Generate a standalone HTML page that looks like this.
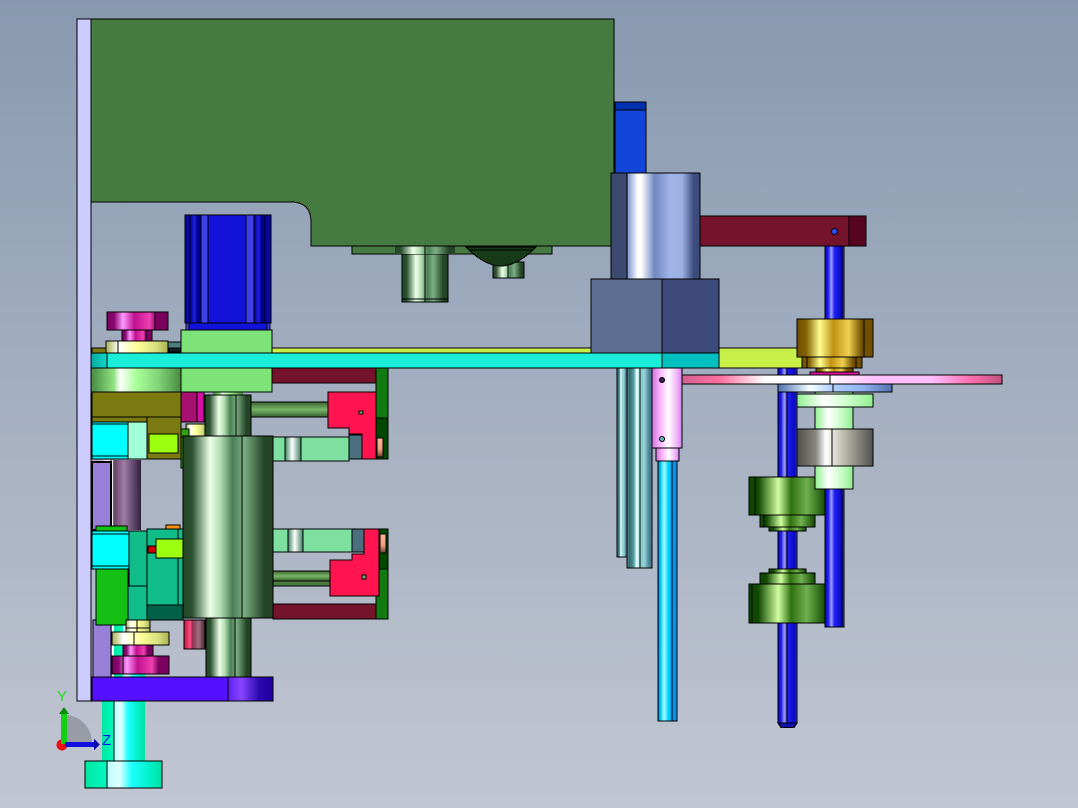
<!DOCTYPE html>
<html><head><meta charset="utf-8"><style>
html,body{margin:0;padding:0;width:1078px;height:808px;overflow:hidden;background:linear-gradient(#8799b0,#c2c6d2)}
svg{display:block}
rect,path.s,polygon{stroke:#000;stroke-width:1}
line{stroke:#000;stroke-width:1}
text{font-family:"Liberation Sans",sans-serif}
</style></head><body>
<svg width="1078" height="808" viewBox="0 0 1078 808" xmlns="http://www.w3.org/2000/svg" shape-rendering="crispEdges">
<defs>
<linearGradient id="mg"><stop offset="0" stop-color="#7a0060"/><stop offset=".12" stop-color="#8a0870"/><stop offset=".26" stop-color="#ff99ff"/><stop offset=".45" stop-color="#c01090"/><stop offset=".7" stop-color="#f040b0"/><stop offset=".82" stop-color="#7a0060"/><stop offset="1" stop-color="#7a0060"/></linearGradient>
<linearGradient id="py"><stop offset="0" stop-color="#a8b050"/><stop offset=".2" stop-color="#fff"/><stop offset=".5" stop-color="#ffff99"/><stop offset=".8" stop-color="#d8e080"/><stop offset="1" stop-color="#a8b050"/></linearGradient>
<linearGradient id="gc"><stop offset="0" stop-color="#458840"/><stop offset=".25" stop-color="#90e080"/><stop offset=".32" stop-color="#fff"/><stop offset=".5" stop-color="#a8ff98"/><stop offset=".75" stop-color="#80d078"/><stop offset="1" stop-color="#458840"/></linearGradient>
<linearGradient id="dg"><stop offset="0" stop-color="#234525"/><stop offset=".1" stop-color="#2a5030"/><stop offset=".3" stop-color="#ecffe8"/><stop offset=".42" stop-color="#b0dcb0"/><stop offset=".55" stop-color="#4a7f55"/><stop offset=".68" stop-color="#7cae84"/><stop offset=".9" stop-color="#234525"/><stop offset="1" stop-color="#234525"/></linearGradient>
<linearGradient id="rod" x2="0" y2="1"><stop offset="0" stop-color="#3a6030"/><stop offset=".5" stop-color="#78b868"/><stop offset="1" stop-color="#3a6030"/></linearGradient>
<linearGradient id="mint"><stop offset="0" stop-color="#3a8060"/><stop offset=".45" stop-color="#fff"/><stop offset="1" stop-color="#3a8060"/></linearGradient>
<linearGradient id="sal" x2="0" y2="1"><stop offset="0" stop-color="#ffb898"/><stop offset=".6" stop-color="#f0a080"/><stop offset="1" stop-color="#604030"/></linearGradient>
<linearGradient id="pur"><stop offset="0" stop-color="#f0d0f0"/><stop offset=".25" stop-color="#fff"/><stop offset=".28" stop-color="#604060"/><stop offset=".55" stop-color="#a07ca8"/><stop offset="1" stop-color="#30203c"/></linearGradient>
<linearGradient id="bb"><stop offset="0" stop-color="#000090"/><stop offset=".4" stop-color="#2020e0"/><stop offset=".7" stop-color="#000090"/><stop offset="1" stop-color="#000090"/></linearGradient>
<linearGradient id="brod"><stop offset="0" stop-color="#0808c0"/><stop offset=".18" stop-color="#2020f0"/><stop offset=".33" stop-color="#a0a0ff"/><stop offset=".5" stop-color="#2020f0"/><stop offset=".9" stop-color="#0808c0"/><stop offset="1" stop-color="#5050e0"/></linearGradient>
<linearGradient id="cyl"><stop offset="0" stop-color="#3d4a70"/><stop offset=".18" stop-color="#3d4a70"/><stop offset=".19" stop-color="#8098d0"/><stop offset=".3" stop-color="#fff"/><stop offset=".34" stop-color="#fff"/><stop offset=".49" stop-color="#7088c0"/><stop offset=".66" stop-color="#a0b4e8"/><stop offset=".8" stop-color="#9cb0e4"/><stop offset=".93" stop-color="#3c4a7c"/><stop offset="1" stop-color="#3c4a7c"/></linearGradient>
<linearGradient id="tealr"><stop offset="0" stop-color="#788c90"/><stop offset=".1" stop-color="#2e6a70"/><stop offset=".28" stop-color="#5aa0a4"/><stop offset=".38" stop-color="#e8ffff"/><stop offset=".6" stop-color="#80c8c8"/><stop offset=".68" stop-color="#98d8e0"/><stop offset=".9" stop-color="#4a7a8c"/><stop offset="1" stop-color="#4a8090"/></linearGradient>
<linearGradient id="ptube"><stop offset="0" stop-color="#d070e0"/><stop offset=".3" stop-color="#ffbbff"/><stop offset=".55" stop-color="#fff"/><stop offset=".85" stop-color="#f0b0f8"/><stop offset="1" stop-color="#d080e8"/></linearGradient>
<linearGradient id="cyr"><stop offset="0" stop-color="#0070b0"/><stop offset=".12" stop-color="#00c0f0"/><stop offset=".32" stop-color="#a0ffff"/><stop offset=".55" stop-color="#00d0ff"/><stop offset=".7" stop-color="#00b0f0"/><stop offset=".71" stop-color="#000"/><stop offset=".75" stop-color="#000"/><stop offset=".76" stop-color="#0090f0"/><stop offset="1" stop-color="#1090f0"/></linearGradient>
<linearGradient id="pbar"><stop offset="0" stop-color="#d06090"/><stop offset=".12" stop-color="#ff70a0"/><stop offset=".26" stop-color="#fff"/><stop offset=".45" stop-color="#fff"/><stop offset=".6" stop-color="#ffc0ff"/><stop offset=".78" stop-color="#ffc0ff"/><stop offset=".9" stop-color="#ff70b0"/><stop offset="1" stop-color="#c05080"/></linearGradient>
<linearGradient id="disc"><stop offset="0" stop-color="#5070b0"/><stop offset=".28" stop-color="#f4ffff"/><stop offset=".48" stop-color="#b0d0ff"/><stop offset=".75" stop-color="#90b0f0"/><stop offset="1" stop-color="#5070b0"/></linearGradient>
<linearGradient id="gold"><stop offset="0" stop-color="#705000"/><stop offset=".12" stop-color="#806000"/><stop offset=".3" stop-color="#ffff90"/><stop offset=".48" stop-color="#c09010"/><stop offset=".68" stop-color="#f0d050"/><stop offset=".85" stop-color="#705000"/><stop offset="1" stop-color="#705000"/></linearGradient>
<linearGradient id="lg"><stop offset="0" stop-color="#90f090"/><stop offset=".35" stop-color="#fff"/><stop offset=".6" stop-color="#d8ffd8"/><stop offset="1" stop-color="#90f090"/></linearGradient>
<linearGradient id="grey"><stop offset="0" stop-color="#505048"/><stop offset=".25" stop-color="#888880"/><stop offset=".38" stop-color="#fff"/><stop offset=".6" stop-color="#c0c0b0"/><stop offset="1" stop-color="#505050"/></linearGradient>
<linearGradient id="pul"><stop offset="0" stop-color="#104800"/><stop offset=".12" stop-color="#104800"/><stop offset=".38" stop-color="#d0ffa0"/><stop offset=".55" stop-color="#307010"/><stop offset=".75" stop-color="#70b050"/><stop offset="1" stop-color="#104800"/></linearGradient>
<linearGradient id="stem"><stop offset="0" stop-color="#00e8a0"/><stop offset=".28" stop-color="#00f8c0"/><stop offset=".3" stop-color="#c0ffff"/><stop offset=".45" stop-color="#e0ffff"/><stop offset=".6" stop-color="#20ffff"/><stop offset=".85" stop-color="#00f0c8"/><stop offset="1" stop-color="#00e0a0"/></linearGradient>
<linearGradient id="vio"><stop offset="0" stop-color="#6020f0"/><stop offset=".3" stop-color="#8844ff"/><stop offset=".7" stop-color="#2808b0"/><stop offset="1" stop-color="#2000a0"/></linearGradient>
<linearGradient id="red2"><stop offset="0" stop-color="#c01040"/><stop offset=".3" stop-color="#ff5080"/><stop offset=".4" stop-color="#903050"/><stop offset=".7" stop-color="#a07080"/><stop offset="1" stop-color="#402028"/></linearGradient>
<linearGradient id="tp"><stop offset="0" stop-color="#00a8a0"/><stop offset="1" stop-color="#10d8c8"/></linearGradient>
</defs>

<!-- rear blue / cylinder group -->
<rect x="615" y="102" width="31" height="8" fill="#0030b0"/>
<rect x="615" y="110" width="31" height="63" fill="#1346d8"/>

<!-- main green plate -->
<rect x="352" y="246" width="200" height="8" fill="#457a40"/>
<rect x="402" y="254" width="46" height="48" fill="url(#dg)"/>
<rect x="395" y="246" width="60" height="8" fill="url(#dg)" style="stroke:none"/>
<line x1="425" y1="246" x2="425" y2="302"/><line x1="402" y1="299" x2="448" y2="299"/>
<rect x="493" y="262" width="31" height="16" fill="url(#dg)"/><line x1="508" y1="262" x2="508" y2="278"/>
<path class="s" d="M466 247H536L532 251C522 260 512 266 501 266C490 266 480 260 470 251Z" fill="#173a18"/>
<line x1="470" y1="250" x2="532" y2="250"/>
<path class="s" d="M91 19H614V246H311V222Q311 202 291 202H91Z" fill="#457a40"/>

<!-- left plate -->
<rect x="77" y="19" width="14" height="682" fill="#ccccff"/>

<!-- motor -->
<rect x="185" y="215" width="86" height="108" fill="#1212d8"/>
<rect x="185" y="215" width="5" height="108" fill="#0808a0"/>
<rect x="190" y="215" width="11" height="108" fill="url(#bb)"/>
<rect x="201" y="215" width="7" height="108" fill="#4040e8"/>
<rect x="246" y="215" width="8" height="108" fill="#4040e8"/>
<rect x="254" y="215" width="11" height="108" fill="url(#bb)"/>
<rect x="265" y="215" width="6" height="108" fill="#0808a0"/>
<rect x="186" y="323" width="84" height="7" fill="#1212d8"/>
<rect x="186" y="323" width="3" height="7" fill="#4040e8"/>
<rect x="267" y="323" width="3" height="7" fill="#4040e8"/>

<!-- top left hat -->
<rect x="107" y="312" width="61" height="18" fill="url(#mg)"/><line x1="155" y1="312" x2="155" y2="330"/>
<rect x="122" y="330" width="30" height="11" fill="url(#mg)"/><line x1="146" y1="330" x2="146" y2="341"/>
<rect x="92" y="348" width="15" height="5" fill="#7a7a10"/>
<rect x="168" y="342" width="14" height="11" fill="#4a8080"/>
<rect x="169" y="348" width="12" height="4" fill="#102020"/>
<rect x="106" y="341" width="62" height="12" fill="url(#py)"/><line x1="118" y1="341" x2="118" y2="353"/>

<!-- long strips -->
<rect x="272" y="348" width="320" height="5" fill="#c8f048"/>
<rect x="719" y="348" width="83" height="20" fill="#c8f048"/>

<!-- left side lower parts (behind) -->
<rect x="103" y="460" width="38" height="70" fill="url(#pur)" style="stroke:none"/>
<line x1="111" y1="460" x2="111" y2="530"/>
<rect x="92" y="462" width="19" height="68" fill="#9880d8" style="stroke-width:2"/>

<!-- dark red bars -->
<rect x="272" y="368" width="104" height="15" fill="#75122c"/>
<rect x="273" y="604" width="103" height="15" fill="#75122c"/>

<!-- upper right-of-column assembly -->
<rect x="376" y="368" width="12" height="50" fill="#117a11"/>
<rect x="376" y="418" width="12" height="41" fill="#004800"/>
<rect x="377" y="438" width="6" height="19" fill="url(#sal)"/>
<rect x="251" y="402" width="77" height="15" fill="url(#rod)"/>
<polygon points="328,392 376,392 376,459 362,459 362,434 349,434 349,428 328,428" fill="#ff1450"/>
<rect x="349" y="435" width="13" height="24" fill="#4a7080"/>
<rect x="273" y="437" width="76" height="24" fill="#7de0a0"/>
<rect x="285" y="437" width="16" height="24" fill="url(#mint)"/>
<path class="s" d="M359 411h4v3h-4z" fill="#6fae70"/>

<!-- lower right-of-column assembly -->
<rect x="379" y="529" width="9" height="40" fill="#004800"/>
<rect x="380" y="534" width="6" height="19" fill="url(#sal)"/>
<rect x="376" y="569" width="12" height="50" fill="#117a11"/>
<rect x="273" y="571" width="57" height="10" fill="url(#rod)"/>
<rect x="273" y="581" width="57" height="5" fill="#4a7a40"/>
<polygon points="364,529 379,529 379,596 330,596 330,560 352,560 352,554 364,554" fill="#ff1450"/>
<rect x="352" y="529" width="12" height="23" fill="#4a7080"/>
<rect x="273" y="529" width="79" height="23" fill="#7de0a0"/>
<rect x="288" y="529" width="15" height="23" fill="url(#mint)"/>
<path class="s" d="M362 575h4v4h-4z" fill="#6fae70"/>

<!-- olive block -->
<rect x="92" y="392" width="90" height="25" fill="#7a7a10"/>
<rect x="92" y="417" width="55" height="6" fill="#7a7a10"/>
<rect x="147" y="417" width="34" height="42" fill="#7a7a10"/>
<rect x="92" y="422" width="36" height="37" fill="#00ffff"/>
<line x1="92" y1="424" x2="128" y2="424"/><line x1="92" y1="456" x2="128" y2="456"/>
<rect x="128" y="422" width="19" height="37" fill="#a0ffd8"/>
<rect x="149" y="434" width="29" height="19" fill="#9cff10"/>
<rect x="181" y="392" width="16" height="30" fill="#a81070"/>
<rect x="197" y="392" width="7" height="30" fill="#d010a0"/>
<rect x="186" y="424" width="20" height="13" fill="url(#py)"/>
<rect x="181" y="429" width="8" height="8" fill="#30a010"/>
<rect x="181" y="437" width="3" height="31" fill="#30a010"/>

<!-- column -->
<rect x="213" y="392" width="30" height="4" fill="url(#gc)" style="stroke:none"/>
<rect x="205" y="395" width="46" height="42" fill="url(#dg)"/><line x1="236" y1="395" x2="236" y2="437"/>
<rect x="206" y="618" width="45" height="59" fill="url(#dg)"/><line x1="235" y1="618" x2="235" y2="677"/>

<!-- lower left teal block -->
<rect x="96" y="526" width="31" height="5" fill="#14c014"/>
<rect x="166" y="525" width="14" height="4" fill="#ff9010"/>
<rect x="147" y="529" width="36" height="91" fill="#10bc88"/>
<rect x="147" y="605" width="36" height="15" fill="#006048"/>
<line x1="178" y1="529" x2="178" y2="605"/>
<rect x="129" y="531" width="18" height="55" fill="#10bc88"/>
<rect x="128" y="586" width="19" height="34" fill="#10bc88"/>
<rect x="92" y="531" width="37" height="38" fill="#00ffff"/>
<line x1="92" y1="534" x2="129" y2="534"/><line x1="92" y1="566" x2="129" y2="566"/>
<rect x="148" y="546" width="8" height="7" fill="#d00000"/>
<rect x="156" y="539" width="30" height="19" fill="#9cff10"/>

<rect x="93" y="620" width="18" height="57" fill="#9880d8"/>
<rect x="112" y="625" width="33" height="52" fill="#fff" style="stroke:none"/>
<rect x="114" y="625" width="31" height="52" fill="url(#stem)" style="stroke:none"/>
<rect x="96" y="569" width="32" height="56" fill="#14c014"/>
<rect x="126" y="620" width="24" height="12" fill="url(#py)"/><line x1="126" y1="628" x2="150" y2="628"/><line x1="137" y1="620" x2="137" y2="632"/>
<rect x="112" y="632" width="57" height="13" fill="url(#py)"/><line x1="134" y1="632" x2="134" y2="645"/>
<rect x="123" y="645" width="30" height="11" fill="url(#mg)"/>
<rect x="112" y="656" width="57" height="18" fill="url(#mg)"/><line x1="123" y1="656" x2="123" y2="674"/>
<rect x="184" y="620" width="21" height="29" fill="url(#red2)"/>

<!-- base & stem -->
<rect x="102" y="701" width="43" height="60" fill="url(#stem)" style="stroke:none"/><line x1="114" y1="701" x2="114" y2="761"/>
<rect x="85" y="761" width="77" height="27" fill="url(#stem)"/><line x1="107" y1="761" x2="107" y2="788"/>
<rect x="92" y="677" width="136" height="24" fill="#5510ff"/>
<rect x="228" y="677" width="45" height="24" fill="url(#vio)"/>

<!-- big cylinder -->
<rect x="183" y="436" width="90" height="182" fill="url(#dg)"/><line x1="242" y1="436" x2="242" y2="618"/>

<!-- teal plate + green box -->
<rect x="91" y="368" width="91" height="24" fill="url(#gc)"/>
<rect x="181" y="368" width="91" height="24" fill="#7de278"/>
<rect x="181" y="330" width="91" height="23" fill="#7de278"/>
<rect x="91" y="353" width="571" height="15" fill="#1aeed8"/>
<rect x="91" y="353" width="16" height="15" fill="url(#tp)"/>
<rect x="662" y="353" width="57" height="15" fill="#00c0c0"/>

<!-- hex + cylinder -->
<rect x="611" y="173" width="89" height="106" fill="url(#cyl)"/><line x1="627" y1="173" x2="627" y2="279"/>
<rect x="591" y="279" width="71" height="74" fill="#5e6e92"/>
<rect x="662" y="279" width="57" height="74" fill="#3d4a7a"/>
<rect x="700" y="216" width="149" height="30" fill="#75122c"/>
<rect x="849" y="216" width="17" height="30" fill="#55051f"/>

<!-- teal rods and pink tube -->
<rect x="617" y="368" width="10" height="189" fill="url(#tealr)"/>
<rect x="627" y="368" width="25" height="200" fill="url(#tealr)"/><line x1="640" y1="368" x2="640" y2="568"/>
<rect x="658" y="461" width="19" height="260" fill="url(#cyr)"/>
<rect x="652" y="368" width="30" height="80" fill="url(#ptube)"/>
<rect x="656" y="448" width="23" height="13" fill="url(#ptube)"/>
<circle cx="662" cy="380" r="2.5" fill="#402050" stroke="#000"/>
<circle cx="662" cy="439" r="2.5" fill="#70b0c0" stroke="#000"/>

<!-- left blue rod -->
<rect x="778" y="368" width="19" height="355" fill="url(#brod)"/><line x1="787" y1="368" x2="787" y2="723"/>
<path d="M778 723H797L794 727.5H781Z" fill="#1010b0" stroke="#000"/>

<!-- pulleys -->
<rect x="749" y="477" width="77" height="38" fill="url(#pul)"/><line x1="755" y1="477" x2="755" y2="515"/>
<rect x="760" y="515" width="55" height="12" fill="url(#pul)"/><line x1="764" y1="515" x2="764" y2="527"/>
<rect x="769" y="527" width="37" height="4" fill="url(#pul)"/>
<rect x="769" y="569" width="37" height="4" fill="url(#pul)"/>
<rect x="760" y="573" width="55" height="11" fill="url(#pul)"/>
<rect x="749" y="584" width="77" height="39" fill="url(#pul)"/><line x1="752" y1="584" x2="752" y2="623"/>

<!-- right blue rod -->
<rect x="825" y="246" width="19" height="381" fill="url(#brod)"/><line x1="842" y1="246" x2="842" y2="627"/>
<circle cx="834.500" cy="231.500" r="3" fill="#3050f0" stroke="#000"/>

<!-- stack on right rod -->
<rect x="815" y="392" width="38" height="97" fill="url(#lg)"/>
<rect x="797" y="394" width="76" height="13" fill="url(#lg)"/>
<rect x="797" y="429" width="76" height="37" fill="url(#grey)"/><line x1="832" y1="429" x2="832" y2="466"/>
<rect x="778" y="384" width="114" height="8" fill="url(#disc)"/><line x1="833" y1="384" x2="833" y2="392"/>
<rect x="816" y="368" width="37" height="4" fill="url(#gold)"/>
<rect x="810" y="372" width="49" height="3" fill="#e010a0"/>
<rect x="802" y="357" width="60" height="11" fill="url(#gold)"/><line x1="807" y1="357" x2="807" y2="368"/><line x1="856" y1="357" x2="856" y2="368"/>
<rect x="797" y="319" width="76" height="38" fill="url(#gold)"/><line x1="864" y1="319" x2="864" y2="357"/>
<rect x="682" y="375" width="320" height="9" fill="url(#pbar)"/><line x1="830" y1="375" x2="830" y2="384"/>

<!-- triad -->
<path d="M66 715A27 28 0 0 1 92 743H66Z" fill="#989ca6"/>
<circle cx="62" cy="745" r="5.500" fill="#e81010"/>
<rect x="61" y="713" width="6" height="31" fill="#10d010" style="stroke:none"/>
<path d="M64 707L69 714H59Z" fill="#0a8a0a"/>
<rect x="65" y="742" width="30" height="5" fill="#1010e0" style="stroke:none"/>
<path d="M100 744.500L94 739V750Z" fill="#0808b0"/>
<text x="57" y="701" font-size="15" fill="#20e020">Y</text>
<text x="102" y="745" font-size="15" fill="#1010f0">Z</text>
</svg>
</body></html>
